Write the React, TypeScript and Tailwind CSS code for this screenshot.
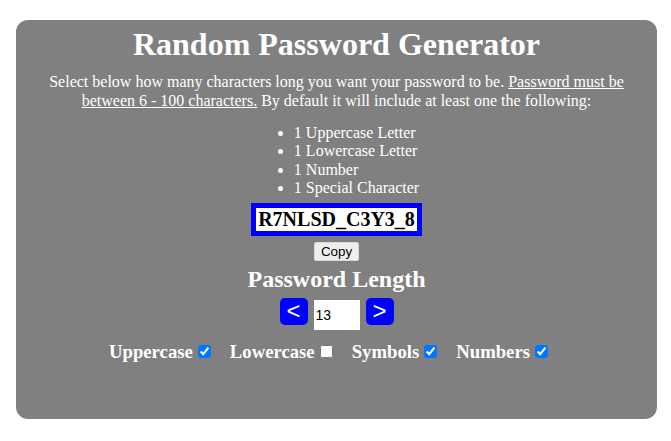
import React, { useState } from "react";

export default function App() {
  const [len, setLen] = useState(13);
  return (
    <div className="w-[671px] h-[441px] bg-white pt-[20px] pl-[16px]" style={{ fontFamily: '"Liberation Serif", "Times New Roman", serif' }}>
      <div className="w-[641px] h-[399px] rounded-[12px] bg-[#808080] text-white flex flex-col items-center text-center">
        <h1 className="text-[32px] font-bold leading-[37px] mt-[6px]">Random Password Generator</h1>
        <p className="text-[16px] leading-[19px] mt-[9px] px-[24px]">
          Select below how many characters long you want your password to be.{" "}
          <span className="underline">Password must be between 6 - 100 characters.</span> By default it will include at least one the following:
        </p>
        <ul className="list-disc pl-[40px] text-left text-[16px] leading-[18.4px] mt-[14px]">
          <li>1 Uppercase Letter</li>
          <li>1 Lowercase Letter</li>
          <li>1 Number</li>
          <li>1 Special Character</li>
        </ul>
        <div className="mt-[5px] border-[5px] border-[#0000ff] bg-white text-black text-[20px] font-bold leading-[23px] px-[2px]">
          R7NLSD_C3Y3_8
        </div>
        <button
          className="mt-[6px] bg-[#efefef] border border-[#d8d8d8] rounded-[2px] px-[6px] py-[1px] text-[13.33px] leading-[15px] text-black"
          style={{ fontFamily: '"Liberation Sans", Arial, sans-serif' }}
        >
          Copy
        </button>
        <h2 className="text-[24px] font-bold leading-[28px] mt-[4px]">Password Length</h2>
        <div className="flex items-start gap-[6px] mt-[5px]">
          <button
            onClick={() => setLen((l) => Math.max(6, l - 1))}
            className="w-[28px] h-[27px] rounded-[5px] bg-[#0000ff] text-white text-[24px] leading-[24px] flex items-center justify-center"
            style={{ fontFamily: '"Liberation Sans", Arial, sans-serif' }}
          >
            &lt;
          </button>
          <input
            value={len}
            onChange={(e) => setLen(Number(e.target.value) || 0)}
            className="mt-[2px] w-[46px] h-[30px] bg-white text-black text-[14px] px-[2px] outline-none"
            style={{ fontFamily: '"Liberation Sans", Arial, sans-serif' }}
          />
          <button
            onClick={() => setLen((l) => Math.min(100, l + 1))}
            className="w-[28px] h-[27px] rounded-[5px] bg-[#0000ff] text-white text-[24px] leading-[24px] flex items-center justify-center"
            style={{ fontFamily: '"Liberation Sans", Arial, sans-serif' }}
          >
            &gt;
          </button>
        </div>
        <div className="flex items-center gap-[19px] mt-[11px] pr-[16px] text-[18.72px] font-bold leading-[22px]">
          <label className="flex items-center gap-[5px]">
            Uppercase <input type="checkbox" defaultChecked className="w-[13px] h-[13px]" />
          </label>
          <label className="flex items-center gap-[5px]">
            Lowercase <input type="checkbox" className="w-[13px] h-[13px]" />
          </label>
          <label className="flex items-center gap-[5px]">
            Symbols <input type="checkbox" defaultChecked className="w-[13px] h-[13px]" />
          </label>
          <label className="flex items-center gap-[5px]">
            Numbers <input type="checkbox" defaultChecked className="w-[13px] h-[13px]" />
          </label>
        </div>
      </div>
    </div>
  );
}
